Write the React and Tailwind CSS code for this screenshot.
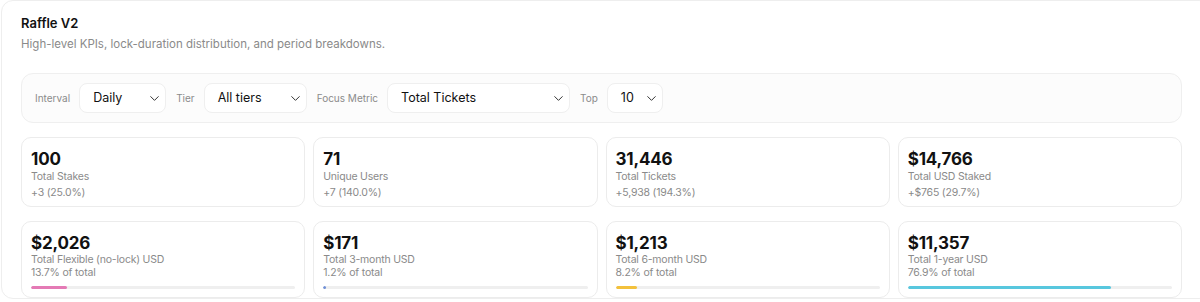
import { ChevronDown } from "lucide-react";

const filters = [
  { label: "Interval", value: "Daily", width: "w-[87px]" },
  { label: "Tier", value: "All tiers", width: "w-[103px]" },
  { label: "Focus Metric", value: "Total Tickets", width: "w-[183px]" },
  { label: "Top", value: "10", width: "w-[56px]" },
];

const kpis = [
  { value: "100", label: "Total Stakes", sub: "+3 (25.0%)" },
  { value: "71", label: "Unique Users", sub: "+7 (140.0%)" },
  { value: "31,446", label: "Total Tickets", sub: "+5,938 (194.3%)" },
  { value: "$14,766", label: "Total USD Staked", sub: "+$765 (29.7%)" },
];

const locks = [
  { value: "$2,026", label: "Total Flexible (no-lock) USD", pct: 13.7, color: "bg-[#e47ab5]" },
  { value: "$171", label: "Total 3-month USD", pct: 1.2, color: "bg-[#6f8fd6]" },
  { value: "$1,213", label: "Total 6-month USD", pct: 8.2, color: "bg-[#f3c13c]" },
  { value: "$11,357", label: "Total 1-year USD", pct: 76.9, color: "bg-[#58c7de]" },
];

function Select({ value, width }) {
  return (
    <div
      className={`${width} h-[30px] flex items-center justify-between bg-white border border-[#efefef] rounded-lg pl-[13px] pr-[3px] text-[12.5px] text-[#111]`}
    >
      <span>{value}</span>
      <ChevronDown size={15} strokeWidth={1.6} className="text-[#333]" />
    </div>
  );
}

function Card({ children }) {
  return (
    <div className="bg-white border border-[#ececec] rounded-[10px] px-[9px] pt-[9px] pb-[5px]">
      {children}
    </div>
  );
}

export default function App() {
  return (
    <div className="w-[1200px] h-[302px] overflow-hidden bg-white font-['Inter',sans-serif]">
      <div className="ml-px w-[1210px] border border-[#eeeeee] rounded-xl pl-[19px] pr-[28px] pt-[12px]">
        <h1 className="text-[13px] leading-5 font-semibold text-[#111]">Raffle V2</h1>
        <p className="mt-px text-[11.5px] leading-5 text-[#8a8a8a]">
          High-level KPIs, lock-duration distribution, and period breakdowns.
        </p>

        <div className="mt-[19px] h-[50px] flex items-center gap-[10px] pl-[13px] bg-[#fcfcfc] border border-[#efefef] rounded-xl">
          {filters.map((f) => (
            <div key={f.label} className="flex items-center gap-[9px]">
              <span className="text-[10px] text-[#8b8b8b]">{f.label}</span>
              <Select value={f.value} width={f.width} />
            </div>
          ))}
        </div>

        <div className="mt-[14px] grid grid-cols-4 gap-x-2 gap-y-[14px]">
          {kpis.map((k) => (
            <Card key={k.label}>
              <div className="mt-[2px] text-[17px] leading-5 font-bold tracking-[-0.2px] text-[#111]">{k.value}</div>
              <div className="text-[10.5px] leading-4 tracking-[-0.2px] text-[#8a8a8a]">{k.label}</div>
              <div className="text-[10.5px] leading-4 tracking-[-0.2px] text-[#8a8a8a]">{k.sub}</div>
            </Card>
          ))}
          {locks.map((l) => (
            <Card key={l.label}>
              <div className="mt-[2px] text-[17px] leading-5 font-bold tracking-[-0.2px] text-[#111]">{l.value}</div>
              <div className="text-[10.5px] leading-[13px] tracking-[-0.2px] text-[#8a8a8a]">{l.label}</div>
              <div className="text-[10.5px] leading-[13px] tracking-[-0.2px] text-[#8a8a8a]">{l.pct}% of total</div>
              <div className="mt-[7px] mb-[3px] h-[3px] rounded-full bg-[#efefef] overflow-hidden">
                <div className={`h-full rounded-full ${l.color}`} style={{ width: `${l.pct}%` }} />
              </div>
            </Card>
          ))}
        </div>
      </div>
    </div>
  );
}
